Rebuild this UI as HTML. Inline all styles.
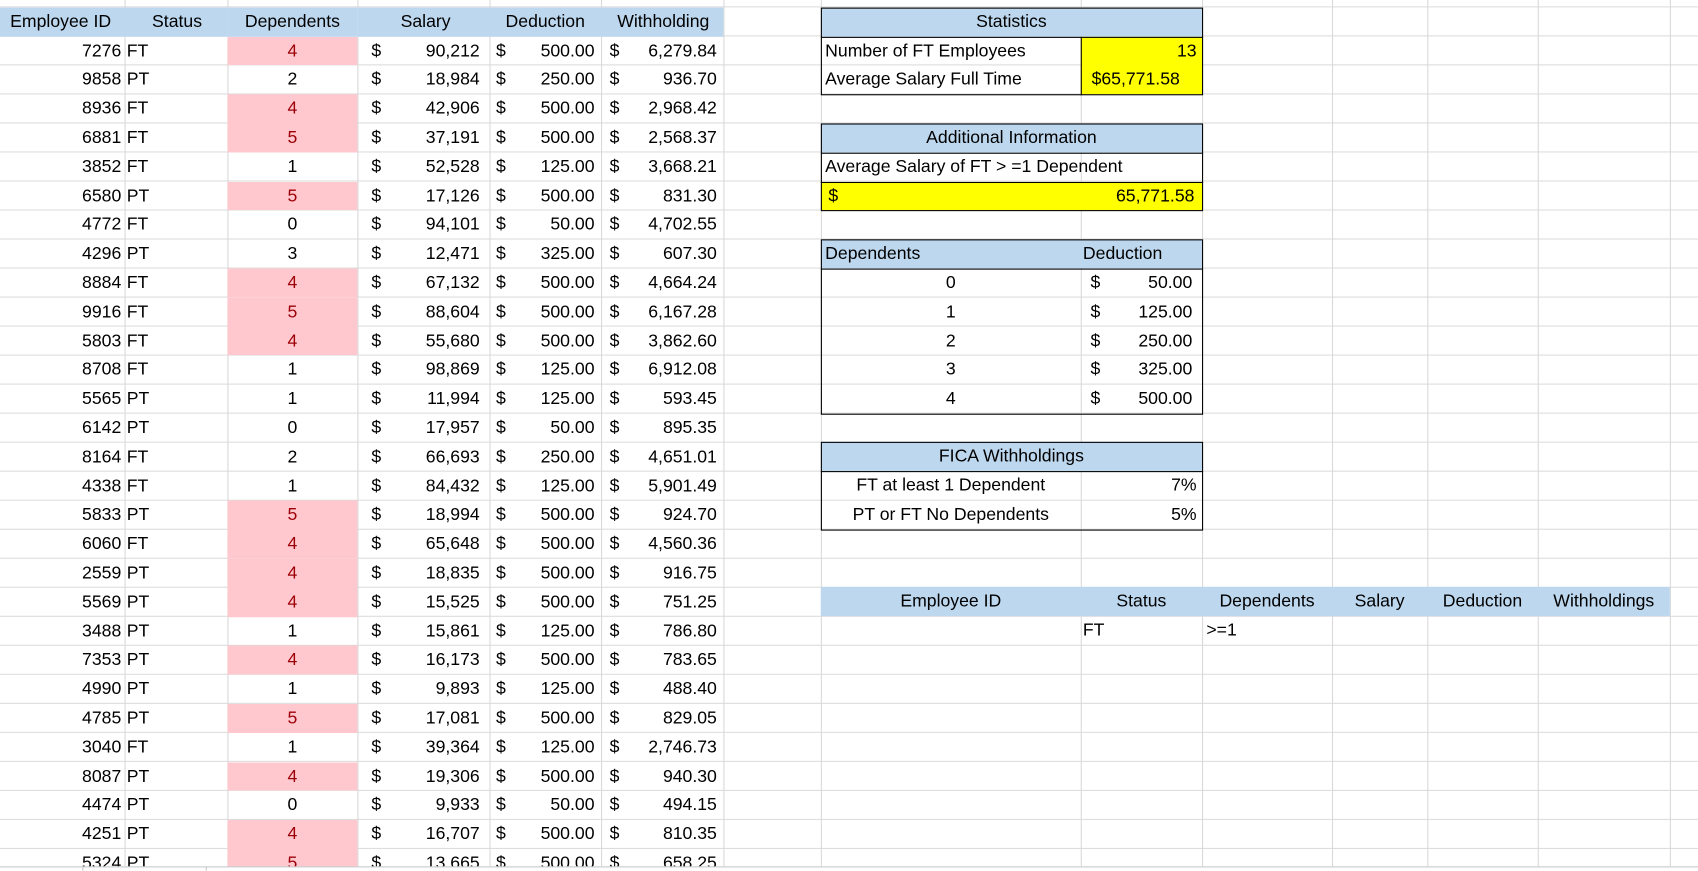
<!DOCTYPE html>
<html><head><meta charset="utf-8"><style>
*{margin:0;padding:0;box-sizing:border-box}
html,body{width:1698px;height:870px;overflow:hidden;background:#fff}
#wrap{position:absolute;left:0;top:0;width:1568px;height:804px;transform:scale(1.0829);transform-origin:0 0;font-family:"Liberation Sans",sans-serif;font-size:16.3px;color:#000}
#sheet{position:absolute;left:0;top:0;width:1568px;height:800px;overflow:hidden;
background-image:repeating-linear-gradient(to bottom,transparent 0,transparent 25.8px,#d9d9d9 25.8px,#d9d9d9 26.8px);background-position:0 6.8px;background-size:1568px 26.8px;background-repeat:repeat-y}
.v{position:absolute;top:0;width:1px;height:800px;background:#d9d9d9}
table{position:absolute;border-collapse:collapse;table-layout:fixed}
td{height:26.8px;padding:0;white-space:nowrap;overflow:hidden;line-height:26.8px}
.l td:nth-child(1){text-align:right;padding-right:3px}
.l td:nth-child(2){padding-left:2px}
.l td:nth-child(3){text-align:center}
.m{text-align:right}
.m span{float:left}
.l td:nth-child(4){padding:0 9px 0 13px}
.l td:nth-child(5){padding:0 6px 0 6px}
.l td:nth-child(6){padding:0 6px 0 8px}
.p{background:#ffc7ce;color:#9c0006}
.hd td{background:#bdd7ee;text-align:center!important}
.box{position:absolute;border:1px solid #000}
.c{position:absolute;height:26.8px;line-height:26.8px;white-space:nowrap}
.blue{background:#bdd7ee}.yel{background:#ffff00}
</style></head><body><div id="wrap">
<div id="sheet">
<div class="v" style="left:115px"></div><div class="v" style="left:210px"></div><div class="v" style="left:330px"></div><div class="v" style="left:452px"></div><div class="v" style="left:555px"></div><div class="v" style="left:668px"></div><div class="v" style="left:758px"></div><div class="v" style="left:998px"></div><div class="v" style="left:1110px"></div><div class="v" style="left:1230px"></div><div class="v" style="left:1318px"></div><div class="v" style="left:1420px"></div><div class="v" style="left:1542px"></div><div class="v" style="left:1568px"></div>

<table class="l" style="left:0;top:6.8px;width:668px">
<colgroup><col style="width:115px"><col style="width:95px"><col style="width:120px"><col style="width:122px"><col style="width:103px"><col style="width:113px"></colgroup>
<tr class="hd"><td>Employee ID</td><td>Status</td><td>Dependents</td><td>Salary</td><td>Deduction</td><td>Withholding</td></tr>
<tr><td>7276</td><td>FT</td><td class="p">4</td><td class="m"><span>$</span>90,212</td><td class="m"><span>$</span>500.00</td><td class="m"><span>$</span>6,279.84</td></tr>
<tr><td>9858</td><td>PT</td><td>2</td><td class="m"><span>$</span>18,984</td><td class="m"><span>$</span>250.00</td><td class="m"><span>$</span>936.70</td></tr>
<tr><td>8936</td><td>FT</td><td class="p">4</td><td class="m"><span>$</span>42,906</td><td class="m"><span>$</span>500.00</td><td class="m"><span>$</span>2,968.42</td></tr>
<tr><td>6881</td><td>FT</td><td class="p">5</td><td class="m"><span>$</span>37,191</td><td class="m"><span>$</span>500.00</td><td class="m"><span>$</span>2,568.37</td></tr>
<tr><td>3852</td><td>FT</td><td>1</td><td class="m"><span>$</span>52,528</td><td class="m"><span>$</span>125.00</td><td class="m"><span>$</span>3,668.21</td></tr>
<tr><td>6580</td><td>PT</td><td class="p">5</td><td class="m"><span>$</span>17,126</td><td class="m"><span>$</span>500.00</td><td class="m"><span>$</span>831.30</td></tr>
<tr><td>4772</td><td>FT</td><td>0</td><td class="m"><span>$</span>94,101</td><td class="m"><span>$</span>50.00</td><td class="m"><span>$</span>4,702.55</td></tr>
<tr><td>4296</td><td>PT</td><td>3</td><td class="m"><span>$</span>12,471</td><td class="m"><span>$</span>325.00</td><td class="m"><span>$</span>607.30</td></tr>
<tr><td>8884</td><td>FT</td><td class="p">4</td><td class="m"><span>$</span>67,132</td><td class="m"><span>$</span>500.00</td><td class="m"><span>$</span>4,664.24</td></tr>
<tr><td>9916</td><td>FT</td><td class="p">5</td><td class="m"><span>$</span>88,604</td><td class="m"><span>$</span>500.00</td><td class="m"><span>$</span>6,167.28</td></tr>
<tr><td>5803</td><td>FT</td><td class="p">4</td><td class="m"><span>$</span>55,680</td><td class="m"><span>$</span>500.00</td><td class="m"><span>$</span>3,862.60</td></tr>
<tr><td>8708</td><td>FT</td><td>1</td><td class="m"><span>$</span>98,869</td><td class="m"><span>$</span>125.00</td><td class="m"><span>$</span>6,912.08</td></tr>
<tr><td>5565</td><td>PT</td><td>1</td><td class="m"><span>$</span>11,994</td><td class="m"><span>$</span>125.00</td><td class="m"><span>$</span>593.45</td></tr>
<tr><td>6142</td><td>PT</td><td>0</td><td class="m"><span>$</span>17,957</td><td class="m"><span>$</span>50.00</td><td class="m"><span>$</span>895.35</td></tr>
<tr><td>8164</td><td>FT</td><td>2</td><td class="m"><span>$</span>66,693</td><td class="m"><span>$</span>250.00</td><td class="m"><span>$</span>4,651.01</td></tr>
<tr><td>4338</td><td>FT</td><td>1</td><td class="m"><span>$</span>84,432</td><td class="m"><span>$</span>125.00</td><td class="m"><span>$</span>5,901.49</td></tr>
<tr><td>5833</td><td>PT</td><td class="p">5</td><td class="m"><span>$</span>18,994</td><td class="m"><span>$</span>500.00</td><td class="m"><span>$</span>924.70</td></tr>
<tr><td>6060</td><td>FT</td><td class="p">4</td><td class="m"><span>$</span>65,648</td><td class="m"><span>$</span>500.00</td><td class="m"><span>$</span>4,560.36</td></tr>
<tr><td>2559</td><td>PT</td><td class="p">4</td><td class="m"><span>$</span>18,835</td><td class="m"><span>$</span>500.00</td><td class="m"><span>$</span>916.75</td></tr>
<tr><td>5569</td><td>PT</td><td class="p">4</td><td class="m"><span>$</span>15,525</td><td class="m"><span>$</span>500.00</td><td class="m"><span>$</span>751.25</td></tr>
<tr><td>3488</td><td>PT</td><td>1</td><td class="m"><span>$</span>15,861</td><td class="m"><span>$</span>125.00</td><td class="m"><span>$</span>786.80</td></tr>
<tr><td>7353</td><td>PT</td><td class="p">4</td><td class="m"><span>$</span>16,173</td><td class="m"><span>$</span>500.00</td><td class="m"><span>$</span>783.65</td></tr>
<tr><td>4990</td><td>PT</td><td>1</td><td class="m"><span>$</span>9,893</td><td class="m"><span>$</span>125.00</td><td class="m"><span>$</span>488.40</td></tr>
<tr><td>4785</td><td>PT</td><td class="p">5</td><td class="m"><span>$</span>17,081</td><td class="m"><span>$</span>500.00</td><td class="m"><span>$</span>829.05</td></tr>
<tr><td>3040</td><td>FT</td><td>1</td><td class="m"><span>$</span>39,364</td><td class="m"><span>$</span>125.00</td><td class="m"><span>$</span>2,746.73</td></tr>
<tr><td>8087</td><td>PT</td><td class="p">4</td><td class="m"><span>$</span>19,306</td><td class="m"><span>$</span>500.00</td><td class="m"><span>$</span>940.30</td></tr>
<tr><td>4474</td><td>PT</td><td>0</td><td class="m"><span>$</span>9,933</td><td class="m"><span>$</span>50.00</td><td class="m"><span>$</span>494.15</td></tr>
<tr><td>4251</td><td>PT</td><td class="p">4</td><td class="m"><span>$</span>16,707</td><td class="m"><span>$</span>500.00</td><td class="m"><span>$</span>810.35</td></tr>
<tr><td>5324</td><td>PT</td><td class="p">5</td><td class="m"><span>$</span>13,665</td><td class="m"><span>$</span>500.00</td><td class="m"><span>$</span>658.25</td></tr>
</table>

<div class="c blue" style="left:758px;top:6.8px;width:352px;text-align:center">Statistics</div>
<div class="c" style="left:762px;top:33.6px">Number of FT Employees</div>
<div class="c yel" style="left:998px;top:33.6px;width:112px;text-align:right;padding-right:5px">13</div>
<div class="c" style="left:762px;top:60.4px">Average Salary Full Time</div>
<div class="c yel" style="left:998px;top:60.4px;width:112px;padding-left:10px">$65,771.58</div>
<div class="box" style="left:758px;top:6.8px;width:353px;height:81.4px"></div>
<div style="position:absolute;left:758px;top:33.6px;width:353px;height:1px;background:#000"></div>
<div style="position:absolute;left:998px;top:33.6px;width:1px;height:54px;background:#000"></div>

<div class="c blue" style="left:758px;top:114px;width:352px;text-align:center">Additional Information</div>
<div class="c" style="left:762px;top:140.8px">Average Salary of FT &gt; =1 Dependent</div>
<div class="c yel" style="left:758px;top:167.6px;width:352px;padding:0 7px"><span style="float:left">$</span><span style="float:right">65,771.58</span></div>
<div class="box" style="left:758px;top:114px;width:353px;height:81.4px"></div>
<div style="position:absolute;left:758px;top:140.8px;width:353px;height:1px;background:#000"></div>
<div style="position:absolute;left:758px;top:167.6px;width:353px;height:1px;background:#000"></div>

<div class="c blue" style="left:758px;top:221.2px;width:352px"></div>
<div class="c" style="left:762px;top:221.2px">Dependents</div>
<div class="c" style="left:1000px;top:221.2px">Deduction</div>
<div class="c" style="left:758px;top:248px;width:240px;text-align:center">0</div>
<div class="c" style="left:758px;top:274.8px;width:240px;text-align:center">1</div>
<div class="c" style="left:758px;top:301.6px;width:240px;text-align:center">2</div>
<div class="c" style="left:758px;top:328.4px;width:240px;text-align:center">3</div>
<div class="c" style="left:758px;top:355.2px;width:240px;text-align:center">4</div>
<div class="c" style="left:998px;top:248px;width:112px;padding:0 9px"><span style="float:left">$</span><span style="float:right">50.00</span></div>
<div class="c" style="left:998px;top:274.8px;width:112px;padding:0 9px"><span style="float:left">$</span><span style="float:right">125.00</span></div>
<div class="c" style="left:998px;top:301.6px;width:112px;padding:0 9px"><span style="float:left">$</span><span style="float:right">250.00</span></div>
<div class="c" style="left:998px;top:328.4px;width:112px;padding:0 9px"><span style="float:left">$</span><span style="float:right">325.00</span></div>
<div class="c" style="left:998px;top:355.2px;width:112px;padding:0 9px"><span style="float:left">$</span><span style="float:right">500.00</span></div>
<div class="box" style="left:758px;top:221.2px;width:353px;height:162px"></div>
<div style="position:absolute;left:758px;top:248px;width:353px;height:1px;background:#000"></div>

<div class="c blue" style="left:758px;top:408.4px;width:352px;text-align:center">FICA Withholdings</div>
<div class="c" style="left:758px;top:435.2px;width:240px;text-align:center">FT at least 1 Dependent</div>
<div class="c" style="left:758px;top:462px;width:240px;text-align:center">PT or FT No Dependents</div>
<div class="c" style="left:998px;top:435.2px;width:112px;text-align:right;padding-right:5px">7%</div>
<div class="c" style="left:998px;top:462px;width:112px;text-align:right;padding-right:5px">5%</div>
<div class="box" style="left:758px;top:408.4px;width:353px;height:81.4px"></div>
<div style="position:absolute;left:758px;top:435.2px;width:353px;height:1px;background:#000"></div>

<div class="c blue" style="left:758px;top:542.4px;width:784px"></div>
<div class="c" style="left:758px;top:542.4px;width:240px;text-align:center">Employee ID</div>
<div class="c" style="left:998px;top:542.4px;width:112px;text-align:center">Status</div>
<div class="c" style="left:1110px;top:542.4px;width:120px;text-align:center">Dependents</div>
<div class="c" style="left:1230px;top:542.4px;width:88px;text-align:center">Salary</div>
<div class="c" style="left:1318px;top:542.4px;width:102px;text-align:center">Deduction</div>
<div class="c" style="left:1420px;top:542.4px;width:122px;text-align:center">Withholdings</div>
<div class="c" style="left:1000px;top:569.2px">FT</div>
<div class="c" style="left:1114px;top:569.2px">&gt;=1</div>
</div>
<div style="position:absolute;left:0;top:800px;width:1568px;height:1px;background:#c8c8c8"></div>
<div style="position:absolute;left:76px;top:800px;width:1px;height:4px;background:#c8c8c8"></div>
<div style="position:absolute;left:190px;top:800px;width:1px;height:4px;background:#c8c8c8"></div>
</div></body></html>
